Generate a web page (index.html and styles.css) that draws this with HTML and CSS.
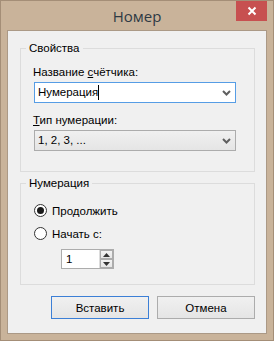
FILE: index.html
```html
<!DOCTYPE html>
<html lang="ru">
<head>
  <meta charset="UTF-8">
  <title>Номер</title>
  <link rel="stylesheet" href="styles.css">
</head>
<body>
  <div class="window">
    <div class="titlebar">
      <span class="title">Номер</span>
      <button class="close" aria-label="Закрыть">
        <svg width="10" height="10" viewBox="0 0 10 10">
          <path d="M1.5 1.5 L8.5 8.5 M8.5 1.5 L1.5 8.5" stroke="#fff" stroke-width="2" fill="none"/>
        </svg>
      </button>
    </div>

    <div class="client">
      <fieldset class="group props">
        <legend>Свойства</legend>
        <div class="label">Название <u>с</u>чётчика:</div>
        <div class="combo editable">
          <span class="value">Нумерация</span><span class="caret"></span>
          <svg class="chevron" width="9" height="6" viewBox="0 0 9 6">
            <path d="M1 1 L4.5 4.5 L8 1" stroke="#5f5f5f" stroke-width="2" fill="none"/>
          </svg>
        </div>
        <div class="label second"><u>Т</u>ип нумерации:</div>
        <div class="combo">
          <span class="value">1, 2, 3, ...</span>
          <svg class="chevron" width="9" height="6" viewBox="0 0 9 6">
            <path d="M1 1 L4.5 4.5 L8 1" stroke="#5f5f5f" stroke-width="2" fill="none"/>
          </svg>
        </div>
      </fieldset>

      <fieldset class="group numbering">
        <legend>Нумерация</legend>
        <div class="radio-row">
          <span class="radio checked"></span>
          <span>Продолжить</span>
        </div>
        <div class="radio-row">
          <span class="radio"></span>
          <span>Начать с:</span>
        </div>
        <div class="spin">
          <span class="spin-value">1</span>
          <div class="spin-buttons">
            <span class="spin-btn">
              <svg width="7" height="4" viewBox="0 0 7 4"><path d="M0 4 L3.5 0 L7 4 Z" fill="#333"/></svg>
            </span>
            <span class="spin-btn">
              <svg width="7" height="4" viewBox="0 0 7 4"><path d="M0 0 L3.5 4 L7 0 Z" fill="#333"/></svg>
            </span>
          </div>
        </div>
      </fieldset>

      <div class="actions">
        <button class="btn default">Вставить</button>
        <button class="btn">Отмена</button>
      </div>
    </div>
  </div>
</body>
</html>
```

FILE: styles.css
```css
body {
  margin: 0;
  padding: 0;
  font-family: 'Liberation Sans', Arial, sans-serif;
  font-size: 11.5px;
  color: #000000;
}

.window {
  width: 274px;
  height: 341px;
  box-sizing: border-box;
  border: 1px solid #a48e77;
  background-color: #c9b39a;
  padding: 0 6px 6px 6px;
  display: flex;
  flex-direction: column;
}

.titlebar {
  height: 29px;
  position: relative;
  display: flex;
  justify-content: center;
  align-items: center;
}

.title {
  font-family: 'Open Sans', sans-serif;
  font-size: 15px;
  color: #2e3a44;
  margin-top: 1px;
}

.close {
  position: absolute;
  right: 0;
  top: 0;
  width: 31px;
  height: 20px;
  border: none;
  padding: 0;
  background-color: #c75050;
  display: flex;
  align-items: center;
  justify-content: center;
}

.client {
  flex: 1;
  border: 1px solid #ab9986;
  background-color: #f0f0f0;
  padding: 10px 11px 0 12px;
}

.group {
  margin: 0;
  border: 1px solid #dcdcdc;
  padding: 0 18px 0 13px;
}

.group legend {
  padding: 0 3px;
  margin-left: -8px;
  line-height: 15px;
  color: #000000;
}

.props {
  padding-top: 9px;
  padding-bottom: 20px;
}

.label {
  line-height: 15px;
  height: 15px;
  margin-bottom: 2px;
  margin-left: -1px;
}

.label.second {
  margin-top: 10px;
}

.combo {
  height: 21px;
  box-sizing: border-box;
  border: 1px solid #acacac;
  background: linear-gradient(#f0f0f0, #e5e5e5);
  display: flex;
  align-items: center;
  padding: 0 0 0 3px;
  position: relative;
}

.combo.editable {
  border-color: #569de5;
  background: #ffffff;
}

.combo .value {
  line-height: 15px;
}

.caret {
  display: inline-block;
  width: 1px;
  height: 15px;
  background-color: #000000;
}

.chevron {
  margin-left: auto;
  margin-right: 4px;
}

.numbering {
  margin-top: 4px;
  padding-top: 12px;
  padding-bottom: 15px;
}

.radio-row {
  display: flex;
  align-items: center;
  height: 15px;
  margin-bottom: 8px;
}

.radio {
  width: 13px;
  height: 13px;
  box-sizing: border-box;
  border: 1px solid #333333;
  border-radius: 50%;
  background-color: #ffffff;
  margin-right: 5px;
  display: flex;
  align-items: center;
  justify-content: center;
}

.radio.checked::after {
  content: "";
  width: 7px;
  height: 7px;
  border-radius: 50%;
  background-color: #1a1a1a;
}

.spin {
  margin-left: 27px;
  width: 53px;
  height: 20px;
  box-sizing: border-box;
  border: 1px solid #acacac;
  background-color: #ffffff;
  display: flex;
}

.spin-value {
  flex: 1;
  padding-left: 4px;
  line-height: 18px;
}

.spin-buttons {
  width: 13px;
  display: flex;
  flex-direction: column;
  border-left: 1px solid #dcdcdc;
}

.spin-btn {
  flex: 1;
  display: flex;
  align-items: center;
  justify-content: center;
  background: linear-gradient(#f3f3f3, #e6e6e6);
  border: 1px solid #acacac;
}

.actions {
  display: flex;
  justify-content: flex-end;
  gap: 8px;
  margin-top: 11px;
}

.btn {
  width: 98px;
  height: 23px;
  font-family: 'Liberation Sans', Arial, sans-serif;
  font-size: 11.5px;
  color: #000000;
  border: 1px solid #acacac;
  background: linear-gradient(#f0f0f0, #e5e5e5);
  padding: 0;
}

.btn.default {
  border-color: #3c7fd6;
}
```
